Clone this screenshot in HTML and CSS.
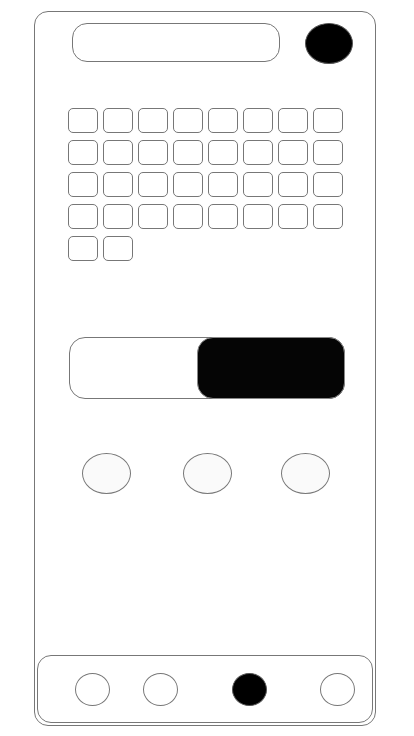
FILE: index.html
```html
<!DOCTYPE html>
<html>

<head>
    <link rel="stylesheet" href="styles.css">
</head>

<body>
    <div class="phone">
        <div class="top">
            <div class="search"></div>
            <div class="avatar"></div>
        </div>

        <div class="keys">
            <div class="key"></div><div class="key"></div><div class="key"></div><div class="key"></div>
            <div class="key"></div><div class="key"></div><div class="key"></div><div class="key"></div>
            <div class="key"></div><div class="key"></div><div class="key"></div><div class="key"></div>
            <div class="key"></div><div class="key"></div><div class="key"></div><div class="key"></div>
            <div class="key"></div><div class="key"></div><div class="key"></div><div class="key"></div>
            <div class="key"></div><div class="key"></div><div class="key"></div><div class="key"></div>
            <div class="key"></div><div class="key"></div><div class="key"></div><div class="key"></div>
            <div class="key"></div><div class="key"></div><div class="key"></div><div class="key"></div>
            <div class="key"></div><div class="key"></div>
        </div>

        <div class="toggle">
            <div class="toggle-off"></div>
            <div class="toggle-on"></div>
        </div>

        <div class="options">
            <div class="opt"></div>
            <div class="opt opt-mid"></div>
            <div class="opt opt-last"></div>
        </div>

        <div class="nav">
            <div class="tab tab-1"></div>
            <div class="tab tab-2"></div>
            <div class="tab tab-3 active"></div>
            <div class="tab tab-4"></div>
        </div>
    </div>
</body>

</html>
```

FILE: styles.css
```css
* {
    box-sizing: border-box;
}

body {
    margin: 0;
    background: #fff;
    font-family: "Liberation Sans", Arial, sans-serif;
}

.phone {
    display: flex;
    flex-direction: column;
    width: 342px;
    height: 715px;
    margin: 11px 0 0 34px;
    border: 1px solid #777;
    border-radius: 14px;
}

.top {
    display: flex;
    align-items: flex-start;
    margin: 11px 0 0 37px;
}

.search {
    width: 208px;
    height: 39px;
    border: 1px solid #777;
    border-radius: 15px;
}

.avatar {
    width: 48px;
    height: 41px;
    margin-left: 25px;
    border: 1px solid #555;
    border-radius: 50%;
    background: #000;
}

.keys {
    display: grid;
    grid-template-columns: repeat(8, 30px);
    grid-auto-rows: 25px;
    gap: 7px 5px;
    margin: 44px 0 0 33px;
}

.key {
    border: 1px solid #777;
    border-radius: 5px;
}

.toggle {
    display: flex;
    width: 276px;
    height: 62px;
    margin: 76px 0 0 34px;
    border: 1px solid #777;
    border-radius: 16px;
}

.toggle-off {
    flex: 1;
}

.toggle-on {
    width: 148px;
    margin: -1px -1px -1px 0;
    border: 1px solid #888;
    border-radius: 16px;
    background: #050505;
}

.options {
    display: flex;
    margin: 54px 0 0 47px;
}

.opt {
    width: 49px;
    height: 41px;
    border: 1px solid #777;
    border-radius: 50%;
    background: #fafafa;
}

.opt-mid {
    margin-left: 52px;
}

.opt-last {
    margin-left: 49px;
}

.nav {
    display: flex;
    align-items: center;
    height: 68px;
    margin: auto 2px 2px 2px;
    border: 1px solid #777;
    border-radius: 14px;
}

.tab {
    width: 35px;
    height: 33px;
    border: 1px solid #777;
    border-radius: 50%;
}

.tab-1 {
    margin-left: 37px;
}

.tab-2 {
    margin-left: 33px;
}

.tab-3 {
    margin-left: 54px;
}

.tab-4 {
    margin-left: 53px;
}

.active {
    background: #000;
    border-color: #555;
}
```
